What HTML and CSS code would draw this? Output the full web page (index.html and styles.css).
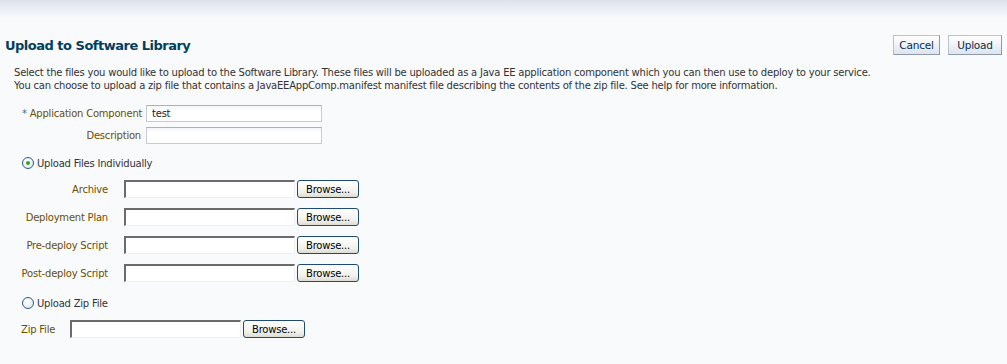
FILE: index.html
```html
<!DOCTYPE html>
<html lang="en">
<head>
    <meta charset="UTF-8">
    <title>Upload to Software Library</title>
    <link rel="stylesheet" href="styles.css">
</head>
<body>
    <div class="top-shade"></div>
    <div class="header">
        <h1 class="title">Upload to Software Library</h1>
        <div class="actions">
            <button class="btn cancel">Cancel</button>
            <button class="btn upload">Upload</button>
        </div>
    </div>

    <div class="content">
        <p class="intro">
            Select the files you would like to upload to the Software Library. These files will be uploaded as a Java EE application component which you can then use to deploy to your service.<br>
            You can choose to upload a zip file that contains a JavaEEAppComp.manifest manifest file describing the contents of the zip file. See help for more information.
        </p>

        <div class="field-grid">
            <label class="label" for="appComp"><span class="required">*</span> Application Component</label>
            <input class="text-input" type="text" id="appComp" value="test">
            <label class="label" for="desc">Description</label>
            <input class="text-input" type="text" id="desc">
        </div>

        <div class="radio-row first">
            <span class="radio checked"></span>
            <span>Upload Files Individually</span>
        </div>

        <div class="file-grid">
            <div class="label">Archive</div>
            <div class="file-pick"><span class="file-box"></span><button class="browse">Browse...</button></div>
            <div class="label">Deployment Plan</div>
            <div class="file-pick"><span class="file-box"></span><button class="browse">Browse...</button></div>
            <div class="label">Pre-deploy Script</div>
            <div class="file-pick"><span class="file-box"></span><button class="browse">Browse...</button></div>
            <div class="label">Post-deploy Script</div>
            <div class="file-pick"><span class="file-box"></span><button class="browse">Browse...</button></div>
        </div>

        <div class="radio-row second">
            <span class="radio"></span>
            <span>Upload Zip File</span>
        </div>

        <div class="zip-row">
            <div class="label">Zip File</div>
            <div class="file-pick"><span class="file-box"></span><button class="browse">Browse...</button></div>
        </div>
    </div>
</body>
</html>
```

FILE: styles.css
```css
:root {
    --page-bg: #f9fafc;
    --title: #003f5f;
    --label: #6b5000;
    --text: #333333;
}

* {
    margin: 0;
    padding: 0;
    box-sizing: border-box;
    font-family: 'DejaVu Sans', Verdana, sans-serif;
}

body {
    background-color: var(--page-bg);
    color: var(--text);
    font-size: 10px;
    letter-spacing: -0.22px;
    width: 1007px;
    height: 364px;
    overflow: hidden;
}

.top-shade {
    height: 18px;
    background: linear-gradient(#dce2ed, var(--page-bg));
}

.header {
    display: flex;
    justify-content: space-between;
    align-items: center;
    padding: 0 5px 0 5px;
    margin-top: 17px;
    height: 20px;
}

.title {
    font-size: 13px;
    font-weight: bold;
    letter-spacing: -0.5px;
    color: var(--title);
}

.actions {
    display: flex;
    gap: 8px;
}

.btn {
    height: 20px;
    border: 1px solid #b9c2cf;
    border-right-color: #8e99aa;
    border-bottom-color: #8e99aa;
    background: linear-gradient(#ffffff, #dee4ee);
    color: #0b2d4c;
    font-size: 10.5px;
    letter-spacing: -0.2px;
}

.btn.cancel {
    width: 47px;
}

.btn.upload {
    width: 54px;
}

.content {
    padding-left: 14px;
}

.intro {
    margin-top: 11px;
    line-height: 13px;
    color: var(--text);
}

.field-grid {
    display: grid;
    grid-template-columns: 119px 176px;
    column-gap: 5px;
    row-gap: 5px;
    margin: 13px 0 0 8px;
    align-items: center;
}

.label {
    color: var(--label);
    text-align: right;
    white-space: nowrap;
}

.required {
    color: #3b6ea5;
}

.text-input {
    height: 17px;
    border: 1px solid #c5ccd6;
    border-top-color: #a9b3c0;
    background: linear-gradient(#f4f6f9, #ffffff 5px);
    padding: 0 5px;
    font-size: 10px;
    letter-spacing: -0.22px;
    color: #222;
    outline: none;
}

.radio-row {
    display: flex;
    align-items: center;
    gap: 3px;
    margin-left: 8px;
    height: 12px;
    color: var(--text);
}

.radio-row.first {
    margin-top: 13px;
}

.radio-row.second {
    margin-top: 15px;
}

.radio {
    width: 12px;
    height: 12px;
    border-radius: 50%;
    border: 1px solid #2a5a8a;
    background: radial-gradient(circle at 40% 35%, #ffffff, #dfe4ea);
    position: relative;
}

.radio.checked::after {
    content: "";
    position: absolute;
    left: 3px;
    top: 3px;
    width: 4px;
    height: 4px;
    border-radius: 50%;
    background: #2fa52f;
}

.file-grid {
    display: grid;
    grid-template-columns: 87px auto;
    column-gap: 16px;
    row-gap: 10px;
    margin: 11px 0 0 7px;
    align-items: center;
    justify-content: start;
}

.file-pick {
    display: flex;
    gap: 2px;
    height: 18px;
}

.file-box {
    width: 171px;
    height: 18px;
    background: #ffffff;
    border-top: 2px solid #6b6b6b;
    border-left: 2px solid #6b6b6b;
    border-right: 1px solid #f0f0f0;
    border-bottom: 1px solid #f0f0f0;
}

.browse {
    width: 62px;
    height: 18px;
    border: 1px solid #1f4a73;
    border-radius: 3px;
    background: linear-gradient(#ffffff, #f1f1ec 70%, #dcdcd2);
    color: #000;
    font-size: 10px;
    letter-spacing: -0.22px;
}

.zip-row {
    display: flex;
    align-items: center;
    margin: 11px 0 0 7px;
}

.zip-row .label {
    text-align: left;
    width: 49px;
}
```
